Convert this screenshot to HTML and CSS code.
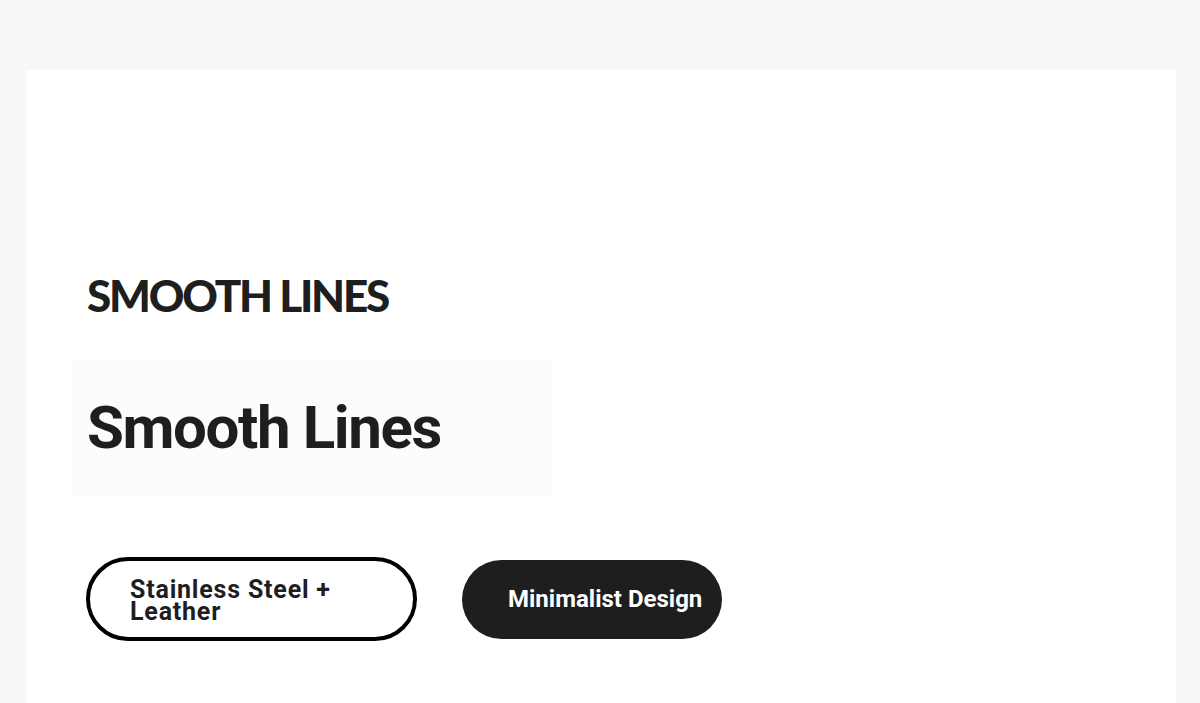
FILE: index.html
```html
<!DOCTYPE html>
<html>
<head>
    <meta charset="utf-8">
    <title>Smooth Lines</title>
    <link rel="stylesheet" href="styles.css">
</head>
<body>
    <div class="card">
        <h2 class="kicker">SMOOTH LINES</h2>
        <div class="title-box">
            <h1 class="title">Smooth Lines</h1>
        </div>
        <div class="tags">
            <a class="tag tag-outline" href="#"><span>Stainless Steel + Leather</span></a>
            <a class="tag tag-dark" href="#"><span>Minimalist Design</span></a>
        </div>
    </div>
</body>
</html>
```

FILE: styles.css
```css
html {
    background: #f7f7f7;
}
body {
    margin: 0;
    padding: 70px 24px 0 26px;
    font-family: Roboto, "Liberation Sans", sans-serif;
    color: #1e1e1f;
}

.card {
    background: #fff;
    height: 633px;
    padding: 0 46px 0 46px;
    box-sizing: border-box;
    display: flex;
    flex-direction: column;
    align-items: flex-start;
}

.kicker {
    font-family: Lato, "Open Sans", sans-serif;
    font-weight: 900;
    font-size: 44px;
    letter-spacing: -2.2px;
    line-height: 1;
    margin: 203px 0 0 15px;
}

.title-box {
    background: #fcfcfc;
    width: 480px;
    height: 138px;
    margin-top: 42px;
    display: flex;
    align-items: center;
    padding-left: 15px;
    box-sizing: border-box;
}
.title {
    font-family: Roboto, sans-serif;
    font-weight: 700;
    font-size: 60px;
    letter-spacing: -1.4px;
    line-height: 1;
    margin: 0;
}

.tags {
    display: flex;
    align-items: center;
    gap: 45px;
    margin: 60px 0 0 14px;
}
.tag {
    display: flex;
    align-items: center;
    border-radius: 50px;
    text-decoration: none;
    font-weight: 700;
    box-sizing: border-box;
}
.tag-outline {
    width: 331px;
    height: 84px;
    border: 4px solid #000;
    color: #1e1e1f;
    padding: 4px 0 0 40px;
    font-size: 25px;
    letter-spacing: 0.8px;
    line-height: 22px;
}
.tag-outline span {
    width: 240px;
}
.tag-dark {
    width: 260px;
    height: 79px;
    background: #1e1e1f;
    color: #fff;
    padding-left: 46px;
    font-size: 24px;
}
```
